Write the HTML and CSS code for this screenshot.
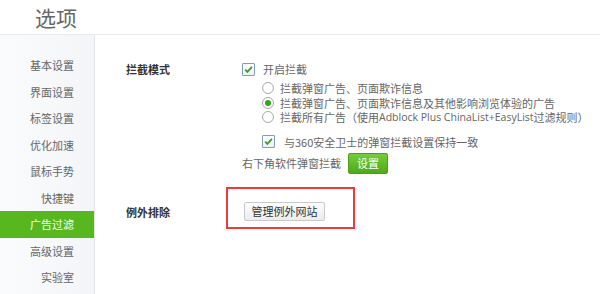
FILE: index.html
```html
<!DOCTYPE html>
<html lang="zh-CN">
<head>
  <meta charset="UTF-8">
  <meta name="viewport" content="width=device-width, initial-scale=1.0">
  <title>选项</title>
  <link rel="stylesheet" href="styles.css">
</head>
<body>
  <header class="top">
    <h1 class="title">选项</h1>
  </header>

  <div class="layout">
    <nav class="sidebar">
      <a href="#" class="nav-item">基本设置</a>
      <a href="#" class="nav-item">界面设置</a>
      <a href="#" class="nav-item">标签设置</a>
      <a href="#" class="nav-item">优化加速</a>
      <a href="#" class="nav-item">鼠标手势</a>
      <a href="#" class="nav-item">快捷键</a>
      <a href="#" class="nav-item active">广告过滤</a>
      <a href="#" class="nav-item">高级设置</a>
      <a href="#" class="nav-item">实验室</a>
    </nav>

    <main class="content">
      <section class="section">
        <div class="label">拦截模式</div>
        <div class="controls">
          <label class="row">
            <span class="checkbox">
              <svg viewBox="0 0 13 13" width="13" height="13"><path d="M3.2 6.6 L5.4 8.9 L9.9 3.9" fill="none" stroke="#3a9f1f" stroke-width="1.8"/></svg>
            </span>
            开启拦截
          </label>
          <div class="radios">
            <label class="row radio-row"><span class="radio"></span>拦截弹窗广告、页面欺诈信息</label>
            <label class="row radio-row"><span class="radio checked"></span>拦截弹窗广告、页面欺诈信息及其他影响浏览体验的广告</label>
            <label class="row radio-row"><span class="radio"></span>拦截所有广告（使用<span class="latin">Adblock Plus ChinaList+EasyList</span>过滤规则）</label>
          </div>
          <label class="row sync">
            <span class="checkbox">
              <svg viewBox="0 0 13 13" width="13" height="13"><path d="M3.2 6.6 L5.4 8.9 L9.9 3.9" fill="none" stroke="#3a9f1f" stroke-width="1.8"/></svg>
            </span>
            与360安全卫士的弹窗拦截设置保持一致
          </label>
          <div class="row popup">
            右下角软件弹窗拦截
            <button class="btn-green">设置</button>
          </div>
        </div>
      </section>

      <section class="section exclude">
        <div class="label">例外排除</div>
        <div class="controls">
          <span class="highlight">
            <button class="btn">管理例外网站</button>
          </span>
        </div>
      </section>
    </main>
  </div>
</body>
</html>
```

FILE: styles.css
```css
body {
  margin: 0;
  padding: 0;
  font-family: "Noto Sans CJK SC", "Microsoft YaHei", sans-serif;
  font-size: 11px;
  color: #666;
  background-color: #fff;
  height: 294px;
  overflow: hidden;
}
.top {
  height: 34px;
  border-bottom: 1px solid #ebebeb;
  padding-left: 35px;
}
.title {
  margin: 0;
  font-size: 21px;
  font-weight: normal;
  line-height: 34px;
  color: #666;
}
.layout {
  display: flex;
  height: 259px;
}
.sidebar {
  width: 95px;
  flex-shrink: 0;
  padding-top: 17px;
  background: linear-gradient(to right, #fafbfc, #f3f5f8);
  border-right: 1px solid #e2e4e7;
  box-sizing: border-box;
}
.nav-item {
  display: block;
  height: 26.5px;
  line-height: 26.5px;
  padding-right: 20px;
  text-align: right;
  font-size: 11px;
  color: #666;
  text-decoration: none;
}
.nav-item.active {
  background-color: #57b71f;
  color: #fff;
}
.content {
  flex: 1;
  padding: 27px 0 0 31px;
}
.section {
  display: grid;
  grid-template-columns: 116px 1fr;
}
.label {
  font-weight: bold;
  color: #333;
  line-height: 14px;
}
.row {
  display: flex;
  align-items: center;
  height: 14px;
  line-height: 14px;
  white-space: nowrap;
}
.latin {
  font-family: "Open Sans", sans-serif;
  font-size: 10.5px;
}
.checkbox {
  width: 11px;
  height: 11px;
  border: 1px solid #7f9cc4;
  border-radius: 1px;
  background: linear-gradient(#fff, #eef1f5);
  margin-right: 8px;
  position: relative;
}
.checkbox svg {
  position: absolute;
  left: -1px;
  top: -1px;
}
.radios {
  margin-top: 5px;
  padding-left: 20px;
}
.radio-row {
  height: 14.5px;
}
.radio {
  width: 10px;
  height: 10px;
  border: 1px solid #a8a8a8;
  border-radius: 50%;
  background: #fff;
  margin-right: 6px;
  box-sizing: content-box;
  display: flex;
  align-items: center;
  justify-content: center;
}
.radio.checked::after {
  content: "";
  width: 6px;
  height: 6px;
  border-radius: 50%;
  background-color: #34a21a;
}
.sync {
  margin-top: 10px;
  padding-left: 20px;
}
.sync .checkbox {
  margin-right: 9px;
}
.popup {
  margin-top: 4px;
  height: 21px;
}
.btn-green {
  margin-left: 7px;
  width: 40px;
  height: 21px;
  padding: 0;
  border: 1px solid #4d9f19;
  border-radius: 2px;
  background: linear-gradient(#75cc3c, #4fab15);
  color: #fff;
  font-family: inherit;
  font-size: 11px;
  cursor: pointer;
}
.exclude {
  margin-top: 13px;
  align-items: end;
}
.exclude .label {
  margin-bottom: 10px;
}
.exclude .controls {
  margin-left: -16px;
}
.highlight {
  display: inline-block;
  border: 2px solid #ef3a3a;
  padding: 13px 28px 6px 16px;
}
.btn {
  display: block;
  width: 81px;
  height: 19px;
  padding: 0;
  border: 1px solid #c9c9c9;
  border-radius: 2px;
  background: linear-gradient(#fefefe, #ececec);
  color: #333;
  font-family: inherit;
  font-size: 11px;
  cursor: pointer;
}
```
